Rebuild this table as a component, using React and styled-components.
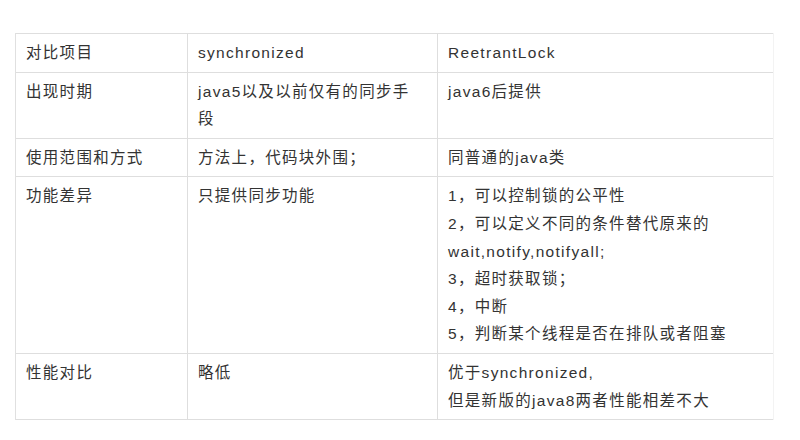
import React from "react";
import styled, { createGlobalStyle } from "styled-components";

const Global = createGlobalStyle`
  html, body { margin: 0; padding: 0; background: #ffffff; }
  body { width: 800px; height: 440px; overflow: hidden; }
`;

const Page = styled.div`
  padding: 33px 0 0 15px;
  font-family: "Liberation Sans", "Noto Sans CJK SC", sans-serif;
`;

const Table = styled.table`
  border-collapse: collapse;
  table-layout: fixed;
  width: 758px;
  color: #333;
  font-size: 15.5px;
  letter-spacing: 1.3px;
  line-height: 27.6px;
`;

const Row = styled.tr`
  border-top: 1px solid #dedede;
  border-bottom: 1px solid #dedede;
`;

const Cell = styled.td`
  vertical-align: top;
  padding: 5px 10px;
  border-left: 1px solid ${(p) => (p.$last ? "#e2e2e2" : "#e0e0e0")};
  border-right: 1px solid ${(p) => (p.$last ? "#f3f3f3" : "#dedede")};
  white-space: normal;
  word-break: break-all;
`;

const Line = styled.div``;

const rows = [
  ["对比项目", ["synchronized"], ["ReetrantLock"]],
  ["出现时期", ["java5以及以前仅有的同步手", "段"], ["java6后提供"]],
  ["使用范围和方式", ["方法上，代码块外围；"], ["同普通的java类"]],
  [
    "功能差异",
    ["只提供同步功能"],
    [
      "1，可以控制锁的公平性",
      "2，可以定义不同的条件替代原来的",
      "wait,notify,notifyall;",
      "3，超时获取锁；",
      "4，中断",
      "5，判断某个线程是否在排队或者阻塞",
    ],
  ],
  ["性能对比", ["略低"], ["优于synchronized,", "但是新版的java8两者性能相差不大"]],
];

export default function App() {
  return (
    <Page>
      <Global />
      <Table>
        <colgroup>
          <col style={{ width: 172 }} />
          <col style={{ width: 250 }} />
          <col style={{ width: 336 }} />
        </colgroup>
        <tbody>
          {rows.map(([a, b, c], i) => (
            <Row key={i}>
              <Cell>{a}</Cell>
              <Cell>
                {b.map((t, j) => (
                  <Line key={j}>{t}</Line>
                ))}
              </Cell>
              <Cell $last>
                {c.map((t, j) => (
                  <Line key={j}>{t}</Line>
                ))}
              </Cell>
            </Row>
          ))}
        </tbody>
      </Table>
    </Page>
  );
}
